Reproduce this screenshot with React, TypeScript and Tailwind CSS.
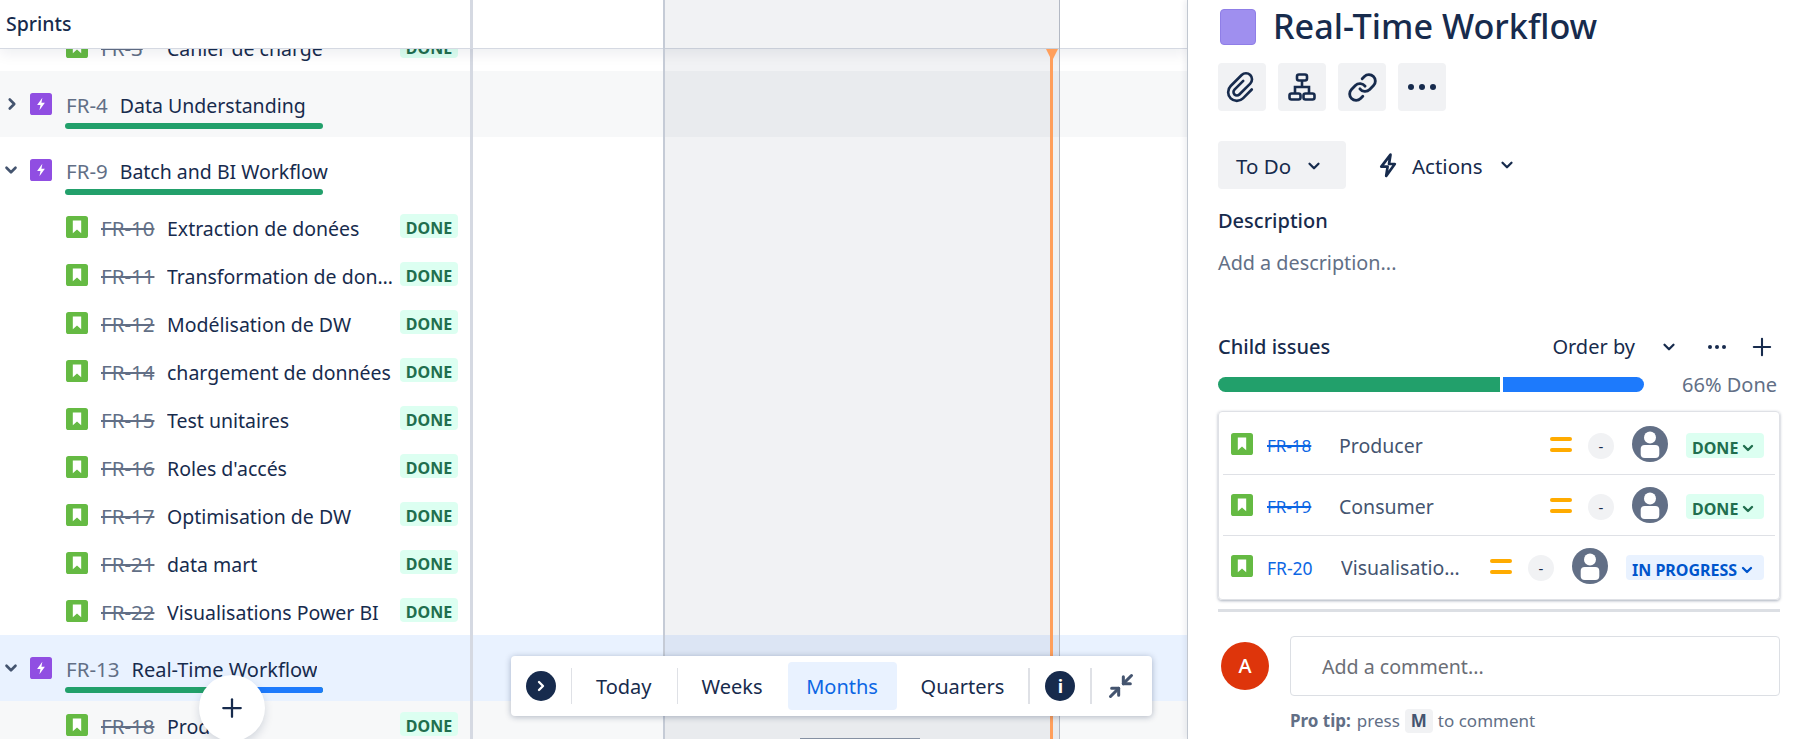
import { ChevronDown, ChevronRight, Link, Minimize2, Plus } from 'lucide-react'

const StoryIcon = () => (
  <svg viewBox="0 0 21 21" className="w-[22px] h-[22px] shrink-0">
    <rect width="21" height="21" rx="2.5" fill="#65ba43" />
    <path d="M6.5 4.3h8v12.2l-4-3.6-4 3.6z" fill="#fff" />
  </svg>
)

const EpicIcon = () => (
  <svg viewBox="0 0 21 21" className="w-[22px] h-[22px] shrink-0">
    <rect width="21" height="21" rx="2.5" fill="#904ee2" />
    <path d="M11.8 4.5 6.8 11.4h3.2l-1 5.1 5.2-7.1h-3.3z" fill="#fff" />
  </svg>
)

const Avatar = () => (
  <svg viewBox="0 0 36 36" className="w-9 h-9 shrink-0">
    <circle cx="18" cy="18" r="18" fill="#626f86" />
    <circle cx="18" cy="11.5" r="6" fill="#fff" />
    <rect x="8.7" y="19" width="18.6" height="13" rx="4" fill="#fff" />
  </svg>
)

const Clip = () => (
  <svg viewBox="0 0 28 28" className="w-8 h-8 overflow-visible" fill="none" stroke="#172b4d" strokeWidth="2.3" strokeLinecap="round">
    <path
      d="M11 9.5v10.8a3 3 0 0 0 6 0V6.8a5.3 5.3 0 0 0-10.6 0v13.6a7.6 7.6 0 0 0 15.2 0V9.5"
      transform="rotate(45 14 14)"
    />
  </svg>
)

const Hierarchy = () => (
  <svg viewBox="0 0 28 28" className="w-7 h-7" fill="none" stroke="#172b4d" strokeWidth="2.6">
    <rect x="9" y="1.5" width="10" height="6" rx="2" />
    <rect x="1.5" y="20.5" width="11" height="6" rx="2" />
    <rect x="15.5" y="20.5" width="11" height="6" rx="2" />
    <path d="M14 7.5V14M7 20.5V14h14v6.5" />
  </svg>
)

const Bolt = () => (
  <svg viewBox="0 0 18 25" className="w-[18px] h-[25px]" fill="none" stroke="#172b4d" strokeWidth="2.7" strokeLinejoin="round">
    <path d="M11.5 1.7 2.3 13.6h6.3L7.2 23 15.8 11H10z" />
  </svg>
)

const Dots = ({ size, gap }: { size: number; gap: number }) => (
  <div className="flex items-center" style={{ gap }}>
    {[0, 1, 2].map((i) => (
      <span
        key={i}
        className="rounded-full bg-[#172b4d]"
        style={{ width: size, height: size }}
      />
    ))}
  </div>
)

const Lozenge = () => (
  <span className="flex items-center justify-center w-[58px] h-6 pt-1 rounded-[4px] bg-[#dcfff1] text-[#216e4e] text-[16px] font-bold">
    DONE
  </span>
)

interface ChildRowProps {
  id: string
  name: string
  bg?: string
}

const ChildRow = ({ id, name, bg }: ChildRowProps) => (
  <div className={`flex h-12 ${bg ?? ''}`}>
    <div className="flex items-center w-[473px] shrink-0 border-r-[3px] border-[#d5d9e2] pl-[66px] pr-[12px]">
      <StoryIcon />
      <span className="ml-[13px] pt-[3px] w-[54px] text-[#626f86] text-[20.5px] line-through decoration-[1.5px] shrink-0 whitespace-nowrap">
        {id}
      </span>
      <span className="ml-3 pt-[3px] text-[19.5px] text-[#172b4d] truncate flex-1 min-w-0">{name}</span>
      <div className="ml-[3px] shrink-0 -mt-[2px]">
        <Lozenge />
      </div>
    </div>
  </div>
)

interface EpicRowProps {
  id: string
  name: string
  open: boolean
  bg?: string
  blue?: boolean
}

const EpicRow = ({ id, name, open, bg, blue }: EpicRowProps) => (
  <div className={`flex h-[66px] ${bg ?? ''}`}>
    <div className="w-[473px] shrink-0 border-r-[3px] border-[#d5d9e2]">
      <div className="flex items-center h-[44px] pt-[22px]">
        <span className="w-[22px] flex justify-center">
          {open ? (
            <ChevronDown className="w-[18px] h-[18px] text-[#44546f]" strokeWidth={3.5} />
          ) : (
            <ChevronRight className="ml-[2px] w-[18px] h-[18px] text-[#44546f]" strokeWidth={3.5} />
          )}
        </span>
        <span className="ml-2 flex">
          <EpicIcon />
        </span>
        <span className="ml-[14px] pt-[3px] text-[20.5px] text-[#626f86] shrink-0">{id}</span>
        <span className={`ml-[12px] pt-[3px] text-[#172b4d] truncate ${blue ? 'text-[20px]' : 'text-[19.5px]'}`}>
          {name}
        </span>
      </div>
      <div className="flex ml-[65px] mt-[8px] w-[258px] h-[6px] rounded-full overflow-hidden bg-[#22a06b]">
        {blue && <div className="ml-auto w-[88px] bg-[#1d7afc]" />}
      </div>
    </div>
  </div>
)

interface IssueRowProps {
  id: string
  name: string
  done: boolean
  h: number
  pad?: string
}

const IssueRow = ({ id, name, done, h, pad }: IssueRowProps) => (
  <div className={`flex items-center pl-3 pr-[15px] ${pad ?? ''}`} style={{ height: h }}>
    <StoryIcon />
    <span
      className={`ml-[14px] pt-1 text-[#0c66e4] shrink-0 ${
        done ? 'text-[17px] line-through decoration-[1.5px] w-[72px]' : 'text-[17.5px] w-[74px]'
      }`}
    >
      {id}
    </span>
    <span className={`pt-[3px] text-[19.5px] text-[#44546f] truncate ${done ? '' : 'w-[120px]'}`}>{name}</span>
    <div className="ml-auto flex items-center shrink-0">
      <div className="flex flex-col gap-[7px] w-[22px]">
        <span className="h-1 rounded-full bg-[#ffab00]" />
        <span className="h-1 rounded-full bg-[#ffab00]" />
      </div>
      <span className="ml-4 mt-1 w-[26px] h-[26px] rounded-full bg-[#f1f2f4] flex items-center justify-center text-[15px] text-[#172b4d]">
        -
      </span>
      <div className="ml-[18px]">
        <Avatar />
      </div>
      {done ? (
        <span className="ml-[18px] mt-[3px] h-[25px] w-[78px] pl-[6px] pt-[4px] rounded-[4px] bg-[#dcfff1] text-[#216e4e] text-[16px] font-bold flex items-center">
          DONE
          <ChevronDown className="w-4 h-4 ml-[2px]" strokeWidth={3.5} />
        </span>
      ) : (
        <span className="ml-[18px] mt-[3px] h-[25px] w-[138px] pl-[6px] pt-[4px] rounded-[4px] bg-[#e9f2ff] text-[#0055cc] text-[16px] font-bold flex items-center">
          IN PROGRESS
          <ChevronDown className="w-4 h-4 ml-[2px]" strokeWidth={3.5} />
        </span>
      )}
    </div>
  </div>
)

const children = [
  { id: 'FR-10', name: 'Extraction de donées' },
  { id: 'FR-11', name: 'Transformation de données' },
  { id: 'FR-12', name: 'Modélisation de DW' },
  { id: 'FR-14', name: 'chargement de données' },
  { id: 'FR-15', name: 'Test unitaires' },
  { id: 'FR-16', name: "Roles d'accés" },
  { id: 'FR-17', name: 'Optimisation de DW' },
  { id: 'FR-21', name: 'data mart' },
  { id: 'FR-22', name: 'Visualisations Power BI' },
]

const App = () => {
  return (
    <div className="flex w-[1816px] h-[739px] overflow-hidden bg-white font-['Noto_Sans',sans-serif] text-[#172b4d]">
      <div className="relative w-[1187px] shrink-0 overflow-hidden">
        <div className="relative z-20 flex h-[49px] bg-white border-b border-[#d5d9e2] shadow-[0_4px_14px_rgba(9,30,66,0.08)]">
          <div className="flex items-center w-[473px] border-r-[3px] border-[#d5d9e2] pl-[6px] text-[19.5px] font-medium">
            Sprints
          </div>
        </div>

        <div className="-mt-[26px]">
          <ChildRow id="FR-3" name="Cahier de charge" />
          <EpicRow id="FR-4" name="Data Understanding" open={false} bg="bg-[#f7f8f9]" />
          <EpicRow id="FR-9" name="Batch and BI Workflow" open />
          {children.map((item) => (
            <ChildRow key={item.id} id={item.id} name={item.name} />
          ))}
          <EpicRow id="FR-13" name="Real-Time Workflow" open blue bg="bg-[#e9f2ff]" />
          <ChildRow id="FR-18" name="Producer" bg="bg-[#f7f8f9]" />
        </div>

        {/* sprint column and today marker */}
        <div className="absolute z-30 top-0 bottom-0 left-[663px] w-[397px] bg-[#091e42]/[0.06] border-l-2 border-r border-l-[#c5cbd6] border-r-[#b3b9c4]" />
        <div className="absolute z-30 top-[49px] bottom-0 left-[1050px] w-[3px] bg-[#ff9f5c]" />
        <svg viewBox="0 0 12 11" className="absolute z-30 top-[49px] left-[1046px] w-3 h-[11px]">
          <path d="M0 0h12L6.5 11h-1z" fill="#ff9f5c" />
        </svg>
        <div className="absolute z-30 bottom-0 left-[800px] w-[120px] h-px bg-[#8590a2]" />

        <div className="absolute z-40 left-[199px] top-[675px] w-[66px] h-[66px] rounded-full bg-white shadow-[0_4px_10px_rgba(9,30,66,0.15)] flex items-center justify-center">
          <Plus className="w-[30px] h-[30px] text-[#172b4d]" strokeWidth={1.8} />
        </div>

        <div className="absolute z-40 left-[511px] top-[656px] w-[641px] h-[60px] rounded-[4px] bg-white shadow-[0_1px_6px_rgba(9,30,66,0.3)] flex items-center pl-[15px] text-[20px]">
          <span className="w-[30px] h-[30px] rounded-full bg-[#172b4d] flex items-center justify-center">
            <ChevronRight className="w-4 h-4 text-white" strokeWidth={3.5} />
          </span>
          <span className="ml-[15px] h-9 w-px bg-[#dfe1e6]" />
          <span className="pl-6 pr-[25px] pt-[2px]">Today</span>
          <span className="h-9 w-px bg-[#dfe1e6]" />
          <span className="pl-6 pr-[25px] pt-[2px]">Weeks</span>
          <span className="h-12 w-[109px] pt-[2px] flex items-center justify-center rounded-[4px] bg-[#e9f2ff] text-[#0c66e4]">Months</span>
          <span className="px-6 pt-[2px]">Quarters</span>
          <span className="h-9 w-[2px] bg-[#dfe1e6]" />
          <span className="ml-[15px] w-[30px] h-[30px] rounded-full bg-[#172b4d] flex items-center justify-center text-white font-bold text-[18px]">
            i
          </span>
          <span className="ml-[15px] h-9 w-[2px] bg-[#dfe1e6]" />
          <Minimize2 className="ml-[15px] w-7 h-7 text-[#44546f]" strokeWidth={2.6} />
        </div>
      </div>

      <aside className="relative z-50 flex-1 border-l border-[#c1c7d0] pl-[30px] pr-9 shadow-[-2px_0_6px_rgba(9,30,66,0.08)] bg-white">
        <div className="flex items-center h-[54px]">
          <span className="ml-[2px] w-[36px] h-[36px] rounded-[4px] bg-[#9f8fef] border border-[#8f7ee7]" />
          <h1 className="ml-[17px] text-[34.2px] font-medium -translate-y-[1px]">Real-Time Workflow</h1>
        </div>

        <div className="flex gap-3 mt-[9px]">
          <span className="w-12 h-12 rounded-[4px] bg-[#f1f2f4] flex items-center justify-center">
            <Clip />
          </span>
          <span className="w-12 h-12 rounded-[4px] bg-[#f1f2f4] flex items-center justify-center">
            <Hierarchy />
          </span>
          <span className="w-12 h-12 rounded-[4px] bg-[#f1f2f4] flex items-center justify-center">
            <Link className="w-[31px] h-[31px] text-[#172b4d]" strokeWidth={2.2} />
          </span>
          <span className="w-12 h-12 rounded-[4px] bg-[#f1f2f4] flex items-center justify-center">
            <Dots size={6} gap={5} />
          </span>
        </div>

        <div className="flex items-center mt-[30px] text-[20.5px]">
          <span className="w-[128px] h-12 pt-[2px] rounded-[4px] bg-[#f1f2f4] flex items-center pl-[18px]">
            To Do
            <ChevronDown className="ml-[14px] w-[18px] h-[18px]" strokeWidth={3} />
          </span>
          <span className="ml-[33px] flex">
            <Bolt />
          </span>
          <span className="ml-[15px] pt-[2px]">Actions</span>
          <ChevronDown className="ml-[15px] w-[18px] h-[18px]" strokeWidth={3} />
        </div>

        <div className="mt-[18px] h-7 text-[20px] leading-7 font-medium">Description</div>
        <div className="mt-[14px] h-7 text-[19.8px] leading-7 text-[#626f86]">Add a description...</div>

        <div className="flex items-center mt-[56px] h-7 text-[20px]">
          <span className="font-medium">Child issues</span>
          <span className="ml-auto">Order by</span>
          <ChevronDown className="ml-[25px] w-[18px] h-[18px]" strokeWidth={3} />
          <span className="ml-[30px]">
            <Dots size={4} gap={3} />
          </span>
          <Plus className="ml-[22px] w-7 h-7" strokeWidth={1.8} />
          <span className="w-1" />
        </div>

        <div className="flex items-center mt-4 h-[15px]">
          <div className="flex w-[426px] h-[15px] rounded-full overflow-hidden">
            <div className="w-[282px] bg-[#22a06b]" />
            <div className="ml-[3px] flex-1 bg-[#1d7afc]" />
          </div>
          <span className="ml-[38px] text-[20px] text-[#626f86]">66% Done</span>
        </div>

        <div className="mt-[19px] h-[189px] rounded-[4px] border border-[#dfe1e6] shadow-[0_1px_3px_rgba(9,30,66,0.35)]">
          <IssueRow id="FR-18" name="Producer" done h={62} pad="pt-[2px]" />
          <div className="h-px mx-1 bg-[#dfe1e6]" />
          <IssueRow id="FR-19" name="Consumer" done h={60} />
          <div className="h-px mx-1 bg-[#dfe1e6]" />
          <IssueRow id="FR-20" name="Visualisation Power BI" done={false} h={63} pad="pb-[3px]" />
        </div>

        <div className="mt-[9px] h-[3px] bg-[#dcdfe4]" />

        <div className="flex mt-6">
          <span className="ml-[3px] mt-[6px] w-12 h-12 rounded-full bg-[#de350b] flex items-center justify-center text-white text-[20px] font-medium">
            A
          </span>
          <div className="ml-[21px] flex-1 h-[60px] pt-[2px] rounded-[4px] border border-[#dcdfe4] flex items-center pl-[31px] text-[19.6px] text-[#6b6e76]">
            Add a comment...
          </div>
        </div>

        <div className="flex items-center mt-3 ml-[72px] text-[17px] text-[#626f86]">
          <span className="font-bold">Pro tip:</span>
          <span className="ml-[6px]">press</span>
          <span className="ml-[5px] w-[28px] h-6 rounded-[4px] bg-[#f1f2f4] flex items-center justify-center font-bold text-[#44546f]">
            M
          </span>
          <span className="ml-[5px]">to comment</span>
        </div>
      </aside>
    </div>
  )
}

export default App
